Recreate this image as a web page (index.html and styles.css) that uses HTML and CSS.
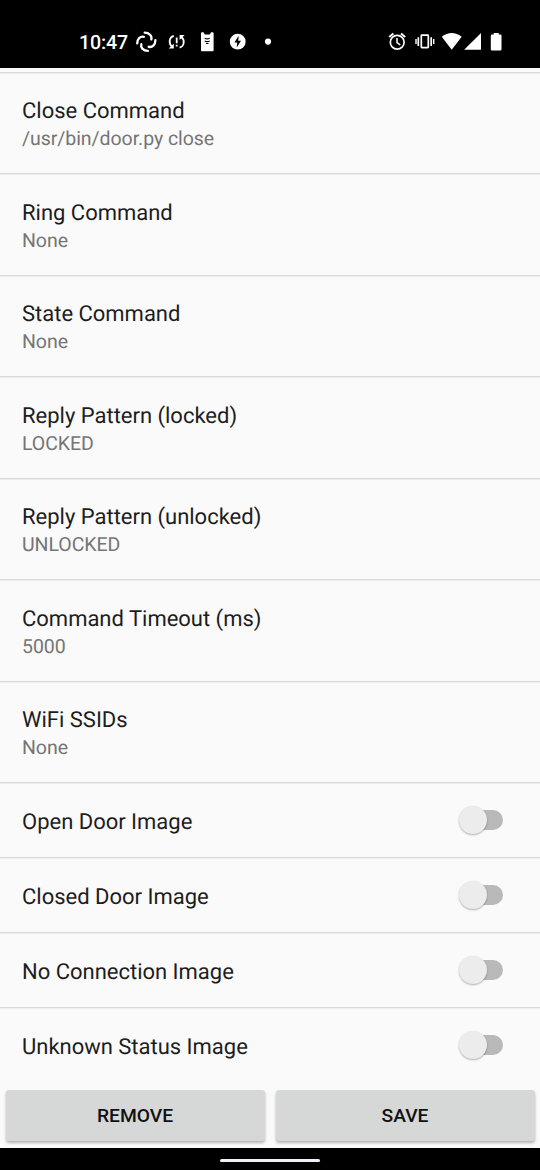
FILE: index.html
```html
<!DOCTYPE html>
<html lang="en">
<head>
<meta charset="utf-8">
<title>Door settings</title>
<link rel="stylesheet" href="styles.css">
</head>
<body>
<div class="screen">
  <header class="status-bar">
    <span class="clock">10:47</span>
    <svg class="left-icons" width="146" height="24" viewBox="134 30 146 24" fill="none" stroke="#fff">
      <g stroke-width="2.300" stroke-linecap="round">
        <path id="swirl" d="M144.700 32.700C149.200 32.700 152.300 36.000 151.300 39.400"/>
        <use href="#swirl" transform="rotate(90 146.300 41.800)"/>
        <use href="#swirl" transform="rotate(180 146.300 41.800)"/>
        <use href="#swirl" transform="rotate(270 146.300 41.800)"/>
      </g>
      <g stroke-width="1.800">
        <path d="M173.800 35.800C168.700 37.400 168.500 43.700 172.200 46.800M179.600 47.700C184.700 46.100 184.900 39.800 181.200 36.700M176.700 37.500v5.700M176.700 44.700v1.700"/>
      </g>
      <path d="M168.800 48.600h5v-5zM184.600 34.900h-5v5z" fill="#fff" stroke="none"/>
      <path d="M201 33.200q0-1 1-1h1.500l1.300 2.300h5l1.300-2.300h1.500q1 0 1 1v17.100q0 1-1 1H202q-1 0-1-1z" fill="#fff" stroke="none"/>
      <path d="M204.700 38.200q2.500 1.200 5 0M204.700 41q2.500 1.200 5 0M206 43.500h2.500" stroke="#000" stroke-width="1.200"/>
      <circle cx="237.700" cy="41.700" r="7.900" fill="#fff" stroke="none"/>
      <path d="M238.700 35.800l-4.300 6.700h2.800l-.5 5.100 4.300-6.900h-2.800z" fill="#000" stroke="none"/>
      <circle cx="268" cy="41.600" r="3.100" fill="#fff" stroke="none"/>
    </svg>
    <svg class="right-icons" width="120" height="24" viewBox="386 30 120 24" fill="none" stroke="#fff">
      <circle cx="397.200" cy="42.300" r="6.900" stroke-width="1.700"/>
      <path d="M397 38v4.700l3.200 2.100" stroke-width="1.500"/>
      <path d="M389.200 36.900l4.200-3.500M405.200 36.900l-4.200-3.500" stroke-width="1.900"/>
      <rect x="421.300" y="35.200" width="7" height="12.400" rx=".6" stroke-width="1.700"/>
      <path d="M418.300 37.200v8.700M431.200 37.200v8.700" stroke-width="1.700"/>
      <path d="M416 39v5M433.700 39v5" stroke-width="1.400"/>
      <path d="M441.800 36.700Q451.700 29.200 461.700 36.700L451.700 49.700z" fill="#fff" stroke="none"/>
      <path d="M464.200 49.800L481 33v16.800z" fill="#fff" stroke="none"/>
      <path d="M493.700 33h5v1.500h1.600q1.200 0 1.200 1.200v13.500q0 1.200-1.200 1.200H492q-1.200 0-1.200-1.200V35.700q0-1.200 1.200-1.200h1.700z" fill="#fff" stroke="none"/>
    </svg>
  </header>
  <main class="preferences">
    <section class="item"><h2 class="title">Close Command</h2><p class="summary">/usr/bin/door.py close</p></section>
    <section class="item"><h2 class="title">Ring Command</h2><p class="summary">None</p></section>
    <section class="item"><h2 class="title">State Command</h2><p class="summary">None</p></section>
    <section class="item"><h2 class="title">Reply Pattern (locked)</h2><p class="summary">LOCKED</p></section>
    <section class="item"><h2 class="title">Reply Pattern (unlocked)</h2><p class="summary">UNLOCKED</p></section>
    <section class="item"><h2 class="title">Command Timeout (ms)</h2><p class="summary">5000</p></section>
    <section class="item"><h2 class="title">WiFi SSIDs</h2><p class="summary">None</p></section>
    <label class="item toggle"><span class="title">Open Door Image</span><span class="switch"><span class="thumb"></span></span></label>
    <label class="item toggle"><span class="title">Closed Door Image</span><span class="switch"><span class="thumb"></span></span></label>
    <label class="item toggle"><span class="title">No Connection Image</span><span class="switch"><span class="thumb"></span></span></label>
    <label class="item toggle"><span class="title">Unknown Status Image</span><span class="switch"><span class="thumb"></span></span></label>
  </main>
  <div class="actions">
    <button class="action">REMOVE</button>
    <button class="action">SAVE</button>
  </div>
  <footer class="nav-bar"><span class="handle"></span></footer>
</div>
</body>
</html>
```
FILE: styles.css
```css
* { box-sizing: border-box; }
body { margin: 0; background: #fafafa; font-family: Roboto, sans-serif; text-rendering: geometricPrecision; }
.screen { width: 540px; height: 1170px; display: flex; flex-direction: column; overflow: hidden; }
.status-bar { flex: none; height: 68px; background: #000; color: #fff; display: flex; align-items: flex-start; padding: 30px 34px 0 79px; }
.clock { width: 55px; font-size: 19.600px; line-height: 25px; font-weight: 500; letter-spacing: -.15px; }
.left-icons, .right-icons { display: block; flex: none; }
.right-icons { margin-left: auto; }
.preferences { flex: 1; min-height: 0; padding-top: 3.500px; overflow: hidden; }
.item { display: block; height: 101.500px; padding: 25.700px 22px 0; border-top: 1px solid #d9d9d9; box-shadow: inset 0 1px #efefef; }
.title { margin: 0; font-size: 22px; line-height: 28px; font-weight: 400; color: #1d1d1d; letter-spacing: -.01px; }
.summary { margin: -1px 0 0; font-size: 19.500px; line-height: 28px; color: #757575; letter-spacing: -.05px; }
.toggle { height: 75px; display: flex; justify-content: space-between; padding: 25.700px 37.500px 0 22px; }
.switch { width: 40px; height: 20px; margin-top: 1.300px; border-radius: 10px; background: #b9b9b9; display: flex; align-items: center; }
.thumb { flex: none; width: 28px; height: 28px; margin-left: -4px; border-radius: 50%; background: #ececec; box-shadow: 0 1px 2px rgba(0,0,0,.3); }
.actions { flex: none; height: 63px; padding: 5px 5.500px 8px; display: grid; grid-template-columns: 1fr 1fr; gap: 11px; }
.action { border: 0; border-radius: 3px; background: #d6d8d7; color: #111; font: 500 19.250px/50px Roboto, sans-serif; padding: 1px 0 0; box-shadow: 0 2px 3px rgba(0,0,0,.28); }
.nav-bar { flex: none; height: 22px; background: #000; display: flex; justify-content: center; padding-top: 10.500px; }
.handle { width: 100px; height: 3px; border-radius: 1.500px; background: #f5f0f5; }
```
